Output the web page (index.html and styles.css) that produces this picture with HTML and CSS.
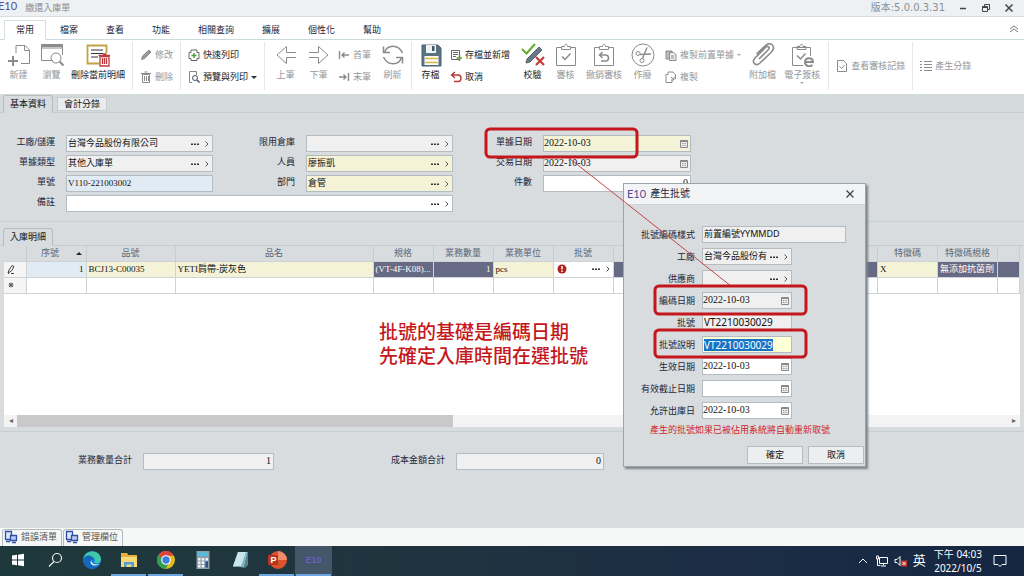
FILE: index.html
```html
<!DOCTYPE html>
<html lang="zh-Hant">
<head>
<meta charset="utf-8">
<title>繳還入庫單</title>
<link rel="stylesheet" href="styles.css">
</head>
<body>
<svg class="sprite" aria-hidden="true">
  <symbol id="cal" viewBox="0 0 10 10"><path d="M1.5 1.5h7v7h-7z" fill="#eee" stroke="#888"/><path d="M1.5 2.5h7" stroke="#888" stroke-width="1"/><path d="M3 4.500h4M3 6.500h4" stroke="#999" stroke-dasharray="1 .6"/></symbol>
  <symbol id="dots" viewBox="0 0 10 8"><path d="M1 3.500h2v1.500h-2zM4 3.500h2v1.500h-2zM7 3.500h2v1.500h-2z" fill="#333"/></symbol>
  <symbol id="chev" viewBox="0 0 6 8"><path d="M1.500 1.500L4 4 1.500 6.500" fill="none" stroke="#555"/></symbol>
  <symbol id="clip" viewBox="0 0 24 24"><path d="M2.500 4.500h19v18h-19z"/><path d="M7.500 6.500v-3h3c0-3 3-3 3 0h3v3z" fill="#fff"/></symbol>
  <symbol id="netpc" viewBox="0 0 14 14"><path d="M1.500 1.500h6v8h-6z" fill="#dbe6ff" stroke="#2f50a0" stroke-width="1.300"/><path d="M6.500 5.500h6v5h-6z" fill="#b9cbf6" stroke="#2f50a0" stroke-width="1.300"/><path d="M2 11.500h4M8 12.500h4" stroke="#2f50a0" stroke-width="1.300"/></symbol>
</svg>

<header class="titlebar">
  <span class="logo">E10</span>
  <h1>繳還入庫單</h1>
  <span class="version">版本:5.0.0.3.31</span>
  <button class="win" aria-label="最小化"><svg viewBox="0 0 10 10"><path d="M2 5.500h6" stroke-width="1.500"/></svg></button>
  <button class="win" aria-label="還原"><svg viewBox="0 0 10 10"><path d="M1.500 3.500h5v5h-5zM3.500 3.500v-2h5v5h-2M1.500 4.500h5"/></svg></button>
  <button class="win" aria-label="關閉"><svg viewBox="0 0 10 10"><path d="M1.500 1.500l7 7M8.500 1.500l-7 7" stroke-width="1.500"/></svg></button>
</header>

<nav class="menu">
  <button class="active">常用</button><button>檔案</button><button>查看</button><button>功能</button><button>相關查詢</button><button>擴展</button><button>個性化</button><button>幫助</button>
  <button class="collapse" aria-label="收合"><svg viewBox="0 0 10 8"><path d="M1 4l4-3 4 3M1 7l4-3 4 3" fill="none" stroke="#777"/></svg></button>
</nav>

<div class="ribbon">
  <div class="group">
    <button class="big off"><svg viewBox="0 0 24 24"><path d="M9 10V2.500h9l4.500 4.500v13.500H14M17.500 3v4.500H22"/><path d="M6 13v10M1 18h10" stroke-width="2"/></svg>新建</button>
    <button class="big off"><svg viewBox="0 0 24 24"><path d="M13 17.500H1.500v-16h21V12M1.500 5h21" /><path d="M2 3h20" stroke-width="2"/><circle cx="16" cy="15" r="5"/><path d="M19.500 18.500l4 4" stroke-width="2"/></svg>瀏覽</button>
    <button class="big"><svg viewBox="0 0 24 24"><path d="M13 20.500H1.500v-18h19V10" stroke="#c3a243" stroke-width="1.800"/><path d="M5 7h12M5 10.500h12M5 14h7" stroke="#334"/><path d="M14 13.500h9v9.500h-9zM12.500 12.500h12M17 11h3.500M16.500 15v6M18.500 15v6M20.500 15v6" stroke="#c0393c" stroke-width="1.300"/></svg>刪除當前明細</button>
  </div>
  <div class="group pair">
    <button class="small off"><svg viewBox="0 0 12 12"><path d="M1.500 10.500l1-3.500L9 1l2 2-6.500 6.500z" fill="#999"/></svg>修改</button>
    <button class="small off"><svg viewBox="0 0 12 12"><path d="M2.500 3.500h7v8h-7zM1 2.500h10M4.500 1h3M4.500 5v5M6.500 5v5M8.500 5v5"/></svg>刪除</button>
  </div>
  <div class="group pair">
    <button class="small"><svg viewBox="0 0 12 12"><path d="M3 3.500V1h6v2.500M3 3.500h-2v6h2v2h6v-2h2v-6H9" stroke="#666"/><path d="M6 4v5M3.500 6.500h5" stroke="#4f9a3a" stroke-width="1.500"/></svg>快速列印</button>
    <button class="small"><svg viewBox="0 0 12 12"><path d="M4 11.500H1.500V.500h7V4" stroke="#888"/><circle cx="7" cy="7" r="2.500" stroke="#456"/><path d="M9 9l2.500 2.500" stroke="#456" stroke-width="1.500"/></svg>預覽與列印<i class="caret"></i></button>
  </div>
  <div class="group record">
    <button class="big off"><svg viewBox="0 0 24 24"><path d="M22 9.500h-9.500V3.500L3 12l9.500 8.500v-6H22" /></svg>上筆</button>
    <button class="big off"><svg viewBox="0 0 24 24"><path d="M2 9.500h9.500V3.500L21 12l-9.500 8.500v-6H2" /></svg>下筆</button>
    <div class="pair">
      <button class="small off"><svg viewBox="0 0 12 12"><path d="M1.500 2v8M11 6H4M6.500 3.500L4 6l2.500 2.500" stroke-width="1.400"/></svg>首筆</button>
      <button class="small off"><svg viewBox="0 0 12 12"><path d="M10.500 2v8M1 6h7M5.500 3.500L8 6 5.500 8.500" stroke-width="1.400"/></svg>末筆</button>
    </div>
    <button class="big off"><svg viewBox="0 0 24 24"><path d="M3.500 9.500C6 1.500 17 .500 21.500 10M20.500 14.500C18 22.500 7 23.500 2.500 14M2.500 3.500v6H9M21.500 20.500v-6H15" stroke-width="1.500"/></svg>刷新</button>
  </div>
  <div class="group roomy">
    <button class="big"><svg viewBox="0 0 24 24"><path d="M3 2h16l3 3v18H3z" fill="#587284" stroke="#4b6273"/><path d="M7 2h10v8H7z" fill="#eef3f6" stroke="none"/><path d="M13 3h2.500v5H13z" fill="#456" stroke="none"/><path d="M5.500 13h14v9h-14z" fill="#fff" stroke="none"/><path d="M6 15.500h13M6 19.500h13" stroke="#d8b63f" stroke-width="1.500"/></svg>存檔</button>
    <div class="pair">
      <button class="small"><svg viewBox="0 0 12 12"><path d="M1.500 1.500h8v9h-8zM3 3.500h5M3 5.500h5M3 7.500h3" stroke="#667"/><path d="M9.500 6v6M6.500 9h6" stroke="#5aa02c" stroke-width="1.600"/></svg>存檔並新增</button>
      <button class="small"><svg viewBox="0 0 12 12"><path d="M5 1L1.500 4 5 7M2 4h6c4 0 4 6.500 0 6.500H4" stroke="#b53a35" stroke-width="1.400"/></svg>取消</button>
    </div>
    <button class="big"><svg viewBox="0 0 24 24"><path d="M1 6l4.500 4.500L14 1" stroke="#5fae2e" stroke-width="2"/><path d="M5 20l1-4L18 4l3 3L9 19z" fill="#667a88" stroke="#526370"/><path d="M15 14l8 8M23 14l-8 8" stroke="#c33b38" stroke-width="2.200"/></svg>校驗</button>
    <button class="big off"><svg viewBox="0 0 24 24"><use href="#clip"/><path d="M8 13.500l3 3 5.500-6" stroke-width="1.500"/></svg>審核</button>
    <button class="big off"><svg viewBox="0 0 24 24"><use href="#clip"/><path d="M10.500 9L7.500 12l3 3M8 12h5.500c4 0 4 6 0 6H9" stroke-width="1.500"/></svg>撤銷審核</button>
    <button class="big off"><svg viewBox="0 0 24 24"><circle cx="12" cy="12" r="11"/><circle cx="7" cy="10.500" r="2"/><circle cx="11" cy="17.500" r="2"/><path d="M9 11.500L20 11M11.500 15.500L16 4.500" stroke-width="1.400"/></svg>作廢</button>
    <div class="pair wide">
      <button class="small off"><svg viewBox="0 0 12 12"><path d="M1 2h6v8H1z" fill="#bbb"/><path d="M4.500 3.500h4l2.500 2v6H4.500zM6 7h3M6 9h3" fill="#eee"/></svg>複製前置單據<i class="caret faint"></i></button>
      <button class="small off"><svg viewBox="0 0 12 12"><path d="M3 3.500V1h5l2.500 2.500V8M3 3.500H1v8h6v-2"/><path d="M6 6l3 3M9 6v3H6"/></svg>複製</button>
    </div>
    <button class="big off"><svg viewBox="0 0 24 24"><path d="M8 16L17 7c2.500-2.500 0-5-2.500-2.500L4 15c-4 4.500 1 9 5 5L20.500 9c5-5.500-1-11-6-6.500L5.500 11" stroke-width="1.600"/></svg>附加檔</button>
    <button class="big off"><svg viewBox="0 0 24 24"><path d="M13 22.500H2.500v-18h18V13M7 6.500v-3h3c0-3 3-3 3 0h3v3z"/><path d="M7 12.500l3.500 3.500 5-5.500" stroke-width="1.500"/><path d="M15 19h8c0-5-8-5-8 0 0 4.500 5 5 7.500 3" stroke-width="2"/></svg>電子簽核<i class="caret faint"></i></button>
  </div>
  <div class="group solo">
    <button class="small off"><svg viewBox="0 0 12 12"><path d="M1.500.500h6l3 3v8h-9zM3.500 6.500l2 2 3-3.500"/></svg>查看審核記錄</button>
  </div>
  <div class="group solo">
    <button class="small off"><svg viewBox="0 0 12 12"><path d="M0 1.500h2M4 1.500h8M0 4.500h2M4 4.500h8M0 7.500h2M4 7.500h8M0 10.500h2M4 10.500h8"/></svg>產生分錄</button>
  </div>
</div>

<main>
  <div class="tabs"><button class="active">基本資料</button><button>會計分錄</button></div>

  <form class="form">
    <label for="f1">工廠/儲運</label>
    <div class="field"><input id="f1" value="台灣今品股份有限公司"><button type="button" aria-label="選擇"><svg><use href="#dots"/></svg></button><button type="button" aria-label="開啟" class="go"><svg><use href="#chev"/></svg></button></div>
    <label for="f2">限用倉庫</label>
    <div class="field"><input id="f2"><button type="button" aria-label="選擇"><svg><use href="#dots"/></svg></button><button type="button" aria-label="開啟" class="go"><svg><use href="#chev"/></svg></button></div>
    <label for="f3">單據日期</label>
    <div class="field must date"><input id="f3" value="2022-10-03"><button type="button" aria-label="日曆"><svg><use href="#cal"/></svg></button></div>

    <label for="f4">單據類型</label>
    <div class="field"><input id="f4" value="其他入庫單"><button type="button" aria-label="選擇"><svg><use href="#dots"/></svg></button><button type="button" aria-label="開啟" class="go"><svg><use href="#chev"/></svg></button></div>
    <label for="f5">人員</label>
    <div class="field must"><input id="f5" value="廖振凱"><button type="button" aria-label="選擇"><svg><use href="#dots"/></svg></button><button type="button" aria-label="開啟" class="go"><svg><use href="#chev"/></svg></button></div>
    <label for="f6">交易日期</label>
    <div class="field date"><input id="f6" value="2022-10-03"><button type="button" aria-label="日曆"><svg><use href="#cal"/></svg></button></div>

    <label for="f7">單號</label>
    <div class="field key"><input id="f7" value="V110-221003002"></div>
    <label for="f8">部門</label>
    <div class="field must"><input id="f8" value="倉管"><button type="button" aria-label="選擇"><svg><use href="#dots"/></svg></button><button type="button" aria-label="開啟" class="go"><svg><use href="#chev"/></svg></button></div>
    <label for="f9">件數</label>
    <div class="field open num"><input id="f9" value="0"></div>

    <label for="f10">備註</label>
    <div class="field open memo"><input id="f10"><button type="button" aria-label="選擇"><svg><use href="#dots"/></svg></button><button type="button" aria-label="開啟" class="go"><svg><use href="#chev"/></svg></button></div>
  </form>

  <section class="detail">
    <div class="tabs"><button class="active">入庫明細</button></div>
    <div class="sheet">
      <table>
        <colgroup><col class="c-mark"><col class="c-unit"><col class="c-item"><col class="c-name"><col class="c-unit"><col class="c-unit"><col class="c-unit"><col class="c-unit"><col><col class="c-unit"><col class="c-unit"><col class="c-mark"></colgroup>
        <thead><tr><th></th><th>序號<i class="sort"></i></th><th>品號</th><th>品名</th><th>規格</th><th>業務數量</th><th>業務單位</th><th>批號</th><th></th><th>特徵碼</th><th>特徵碼規格</th><th></th></tr></thead>
        <tbody>
          <tr><td class="mark"><svg viewBox="0 0 10 10"><path d="M2 9l1-3 3-4.500 2 1L5.500 7zM2 9.500h1M5 9.500h3" fill="none" stroke="#444"/></svg></td><td class="key num">1</td><td class="must">BCJ13-C00035</td><td class="must">YETI肩帶-炭灰色</td><td class="lock">(VT-4F-K08)...</td><td class="lock num">1</td><td class="must">pcs</td><td class="pick"><div class="lot"><svg class="err" viewBox="0 0 10 10"><circle cx="5" cy="5" r="4.500" fill="#b3201c"/><path d="M5 2v3.500M5 6.500v1.500" stroke="#fff" stroke-width="1.500"/></svg><button aria-label="選擇"><svg><use href="#dots"/></svg></button><button aria-label="開啟" class="go"><svg><use href="#chev"/></svg></button></div></td><td class="lock"></td><td class="must">X</td><td class="lock">無添加抗菌劑</td><td class="lock"></td></tr>
          <tr><td class="mark"><svg viewBox="0 0 10 10"><path d="M5 2.500v5M2.500 5h5M3 3l4 4M7 3L3 7" stroke="#555"/></svg></td><td></td><td></td><td></td><td></td><td></td><td></td><td></td><td></td><td></td><td></td><td></td></tr>
        </tbody>
      </table>
      <div class="scroll"><button aria-label="向左">◂</button><div class="track"><div class="thumb"></div></div><button aria-label="向右">▸</button></div>
    </div>
  </section>

  <section class="totals">
    <label for="t1">業務數量合計</label><div class="field num"><input id="t1" value="1"></div>
    <label for="t2">成本金額合計</label><div class="field num"><input id="t2" value="0"></div>
  </section>
</main>

<div class="dock">
  <button><svg><use href="#netpc"/></svg>錯誤清單</button><button><svg><use href="#netpc"/></svg>管理欄位</button>
</div>

<footer class="taskbar">
  <button aria-label="開始"><svg viewBox="0 0 20 20"><path d="M4 5.500l5-.7v4.700H4zM10 4.700l6-.9v5.700h-6zM4 10.500h5v4.700l-5-.7zM10 10.500h6v5.700l-6-.9z" fill="#fff"/></svg></button>
  <button aria-label="搜尋"><svg viewBox="0 0 20 20"><circle cx="12" cy="8" r="4.500" fill="none" stroke="#eee" stroke-width="1.200"/><path d="M9 11.500L4 16.500" stroke="#eee" stroke-width="1.300"/></svg></button>
  <button aria-label="Edge"><svg viewBox="0 0 20 20"><circle cx="10" cy="10" r="9" fill="#1c7fd4"/><path d="M1.500 8C4-1 18-.5 19 9c0 4-4 5-7 3.500 2-2 .5-5.500-2.500-5.500C6 7 3 7 1.500 8z" fill="#41c8a8"/><path d="M3 7c3-3 9-1 8.500 3-3-1-4.500 2.500-2 5 2 2 5 2 7.500.500-4 5-13 4-15.500-3-.5-2 0-4 1.500-5.500z" fill="#1568bc"/><path d="M9.500 10c-1 3 3 6 8 3.500-3 3-9 2.500-9-1.500z" fill="#e7f5f8"/></svg></button>
  <button aria-label="檔案總管" class="run"><svg viewBox="0 0 20 20"><path d="M2 3h6l1.500 2H18v12H2z" fill="#e5b13c"/><path d="M2 7h16v10H2z" fill="#f8d978"/><path d="M5 17v-5h10v5h-2.500v-2.500h-5V17z" fill="#4d9fd6"/></svg></button>
  <button aria-label="Chrome" class="run"><svg viewBox="0 0 20 20"><circle cx="10" cy="10" r="9" fill="#e3b820"/><path d="M10 10L2.200 5.500A9 9 0 0 1 17.800 5.500L10 6z" fill="#dc4437"/><path d="M10 10L2.200 5.500A9 9 0 0 0 9.500 19l4-7z" fill="#2f9e50"/><circle cx="10" cy="10" r="4.800" fill="#fff"/><circle cx="10" cy="10" r="3.700" fill="#3c7fe0"/></svg></button>
  <button aria-label="小算盤"><svg viewBox="0 0 20 20"><path d="M3.500 1h13v18h-13z" fill="#8d9fae"/><path d="M5 2.500h10v3.500H5z" fill="#51c0dc"/><path d="M5 8h2.500v2.500H5zM8.700 8h2.500v2.500H8.700zM12.500 8H15v2.500h-2.500zM5 11.500h2.500V14H5zM8.700 11.500h2.500V14H8.700zM5 15h2.500v2.500H5zM8.700 15h2.500v2.500H8.700z" fill="#f2f5f7"/><path d="M12.500 11.500H15v6h-2.500z" fill="#2a4f86"/></svg></button>
  <button aria-label="記事本"><svg viewBox="0 0 20 20"><path d="M8 2h10l-4 15H3z" fill="#7fb6c6"/><path d="M8 2h8l-5 14H3z" fill="#c9e6ec"/><path d="M3 16l11 1 4-15v13l-3 3z" fill="#5c8190"/></svg></button>
  <button aria-label="PowerPoint" class="run"><svg viewBox="0 0 20 20"><circle cx="11" cy="10" r="9" fill="#d9532f"/><path d="M11 1a9 9 0 0 1 9 9h-9z" fill="#f08c6c"/><path d="M1 5h10v10H1z" fill="#b7351b"/><text x="3.500" y="13" class="ppt">P</text></svg></button>
  <button class="run current">E10</button>
  <span class="tray">
    <svg viewBox="0 0 12 12"><path d="M2 8l4-4 4 4"/></svg>
    <svg viewBox="0 0 14 12"><path d="M4.500 2.500h8v6h-8zM8.500 8.500v2M6 11h5M1.500 1v3h2v-3zM2.500 4v6.500h3"/></svg>
    <svg viewBox="0 0 14 12"><path d="M1 4.500h2l3-3v9l-3-3H1z"/><path d="M7 5.500h6v6H7z" fill="#c8322f" stroke="none"/><path d="M8.500 7l3 3M11.500 7l-3 3"/></svg>
    <b>英</b>
    <time>下午 04:03<br>2022/10/5</time>
    <svg class="note" viewBox="0 0 14 14"><path d="M1 1.500h12v9H9l-2 2-2-2H1z"/></svg>
  </span>
</footer>

<p class="remark">批號的基礎是編碼日期<br>先確定入庫時間在選批號</p>

<section class="dialog" role="dialog" aria-labelledby="dt">
  <header><span class="logo">E10</span><h2 id="dt">產生批號</h2><button class="win" aria-label="關閉"><svg viewBox="0 0 10 10"><path d="M1.500 1.500l7 7M8.500 1.500l-7 7" stroke-width="1.300"/></svg></button></header>
  <form>
    <label for="d1">批號編碼樣式</label><div class="field long mono"><input id="d1" value="前置編號YYMMDD"></div>
    <label for="d2">工廠</label><div class="field"><input id="d2" value="台灣今品股份有"><button type="button" aria-label="選擇"><svg><use href="#dots"/></svg></button><button type="button" aria-label="開啟" class="go"><svg><use href="#chev"/></svg></button></div>
    <label for="d3">供應商</label><div class="field"><input id="d3"><button type="button" aria-label="選擇"><svg><use href="#dots"/></svg></button><button type="button" aria-label="開啟" class="go"><svg><use href="#chev"/></svg></button></div>
    <label for="d4">編碼日期</label><div class="field date"><input id="d4" value="2022-10-03"><button type="button" aria-label="日曆"><svg><use href="#cal"/></svg></button></div>
    <label for="d5">批號</label><div class="field mono"><input id="d5" value="VT2210030029"></div>
    <label id="l6">批號說明</label><div class="field mono focus"><span class="sel" role="textbox" aria-labelledby="l6" contenteditable="true">VT2210030029</span></div>
    <label for="d7">生效日期</label><div class="field date open"><input id="d7" value="2022-10-03"><button type="button" aria-label="日曆"><svg><use href="#cal"/></svg></button></div>
    <label for="d8">有效截止日期</label><div class="field date open"><input id="d8"><button type="button" aria-label="日曆"><svg><use href="#cal"/></svg></button></div>
    <label for="d9">允許出庫日</label><div class="field date open"><input id="d9" value="2022-10-03"><button type="button" aria-label="日曆"><svg><use href="#cal"/></svg></button></div>
  </form>
  <p>產生的批號如果已被佔用系統將自動重新取號</p>
  <div class="actions"><button>確定</button><button>取消</button></div>
</section>

<svg class="marks" aria-hidden="true">
  <path d="M569 158L731 286" stroke="#c4444a" stroke-width="1"/>
  <rect x="486" y="129" width="151" height="28" rx="4"/>
  <rect x="655" y="286" width="151" height="28" rx="4"/>
  <rect x="655" y="330" width="151" height="27" rx="4"/>
</svg>
</body>
</html>
```
FILE: styles.css
```css
* { box-sizing: border-box; }
body {
  margin: 0;
  min-height: 100vh;
  display: flex;
  flex-direction: column;
  position: relative;
  overflow-x: hidden;
  background: #d8dcde;
  color: #23263a;
  font: 9px/12px "Liberation Sans", "Noto Sans CJK TC", sans-serif;
}
button, input { font: inherit; color: inherit; margin: 0; padding: 0; border: 0; background: none; }
h1, h2, p { margin: 0; font-size: inherit; font-weight: 400; }
.sprite { position: absolute; width: 0; height: 0; }
.logo { color: #54499a; font: 11px/14px Lato, sans-serif; }

.titlebar { display: flex; align-items: center; height: 17px; padding-right: 7px; background: #edf1f3; border-bottom: 1px solid #d9dddf; }
.titlebar .logo { padding-bottom: 4px; margin-left: -2px; }
.titlebar h1 { flex: 1; margin-left: 8px; color: #8c8f94; }
.version { color: #8c8f94; font: 10px/12px "DejaVu Sans", "Noto Sans CJK TC", sans-serif; margin-right: 3px; }
.win { width: 16px; margin-left: 7px; display: flex; justify-content: center; }
.win svg { width: 10px; height: 10px; fill: none; stroke: #444; }

.menu { display: flex; height: 23px; padding: 3px 4px 0; background: #fff; border-bottom: 1px solid #cbdadb; }
.menu button { padding: 0 13px; border: 1px solid transparent; height: 20px; }
.menu .active { padding: 0 11px; background: #fff; border-color: #d5dee0; border-bottom-color: #fff; }
.menu .collapse { margin-left: auto; padding: 0; }
.menu svg { width: 10px; height: 8px; }

.ribbon { display: flex; height: 54px; padding-left: 2px; background: #fff; color: #222; }
.group { display: flex; margin: 2px 0 4px; padding: 0 4px; border-right: 1px solid #e4e7e8; }
.group:first-child { padding-left: 0; }
.group:last-child { border-right: 0; }
.group svg { fill: none; stroke: #8b8b8b; }
.off { color: #94979b; }
.big { display: flex; flex-direction: column; align-items: center; min-width: 33px; padding: 1px 3px 0; line-height: 14px; }
.big svg { width: 24px; height: 24px; margin-bottom: 1px; }
.record { padding-right: 2px; }
.record .pair + .big { margin-left: 2px; }
.group.roomy { padding-left: 2px; }
.roomy .big { padding: 1px 4px 0; }
.roomy .pair + .big { margin-left: 3px; }
.pair { display: flex; flex-direction: column; gap: 8px; padding-top: 6px; }
.group.pair { padding-top: 6px; }
.roomy .wide { padding-left: 3px; }
.roomy .wide + .big { margin-left: 1px; }
.small { display: flex; align-items: center; gap: 3px; padding: 0 3px; height: 14px; }
.small svg { width: 12px; height: 12px; }
.solo { align-items: center; }
.caret { border: 3px solid transparent; border-top-color: #333; border-bottom: 0; }
.faint { border-width: 2px; border-bottom: 0; border-top-color: #aaa; }

main { flex: 1; display: flex; flex-direction: column; }
.tabs { display: flex; align-items: center; gap: 4px; height: 19px; padding: 1px 3px 0; background: #d4d9db; border-bottom: 1px solid #c7cccf; }
.tabs button { height: 14px; line-height: 12px; padding: 0 6px; background: #e9ecee; border: 1px solid #c9ced1; color: #111; }
.tabs .active { height: 18px; background: #d8dcde; border-color: #b6bcc0; border-bottom: 0; border-radius: 3px 3px 0 0; }

.form { display: grid; grid-template-columns: 55px 147px 71px 147px 68px 148px; column-gap: 11px; row-gap: 3px; padding: 22px 0 9px; border-bottom: 1px solid #cbd0d3; }
label { text-align: right; line-height: 14px; white-space: nowrap; }
.field { display: flex; align-items: center; height: 17px; min-width: 0; background: #f0f0f0; border: 1px solid #b4bcc1; color: #111; }
.field input { flex: 1; width: 0; min-width: 0; height: 100%; padding: 0 0 2px 1px; font: 9px/12px "Liberation Serif", "Noto Sans CJK TC", serif; }
.date input, .num input { font-size: 10px; }
.date input { padding-left: 0; }
.field button, .lot button { display: flex; margin-right: 4px; }
.field button svg, .lot button svg { width: 10px; height: 8px; }
.field .go svg, .lot .go svg { width: 6px; }
.field .go { margin-right: 2px; }
.date button svg { width: 10px; height: 10px; }
.date button { margin-right: 1px; }
.must { background: #f5f3d7; }
.key { background: #e1ebf3; }
.open { background: #fff; }
.num input, td.num { text-align: right; padding-right: 2px; }
.memo { grid-column: 2 / 5; }

.detail { flex: 1; display: flex; flex-direction: column; padding-top: 5px; border-bottom: 1px solid #c9ced1; }
.detail .tabs { background: none; }
.sheet { flex: 1; display: flex; flex-direction: column; justify-content: space-between; margin: 0 4px 4px; background: #fff; }
table { width: 100%; table-layout: fixed; border-collapse: collapse; font: 9px/13px "Liberation Serif", "Noto Sans CJK TC", serif; color: #111; }
.c-mark { width: 22px; } .c-unit { width: 60px; } .c-item { width: 89px; } .c-name { width: 198px; }
th { height: 15px; padding: 0; background: #d8dcde; border-right: 1px solid #c8cdd0; color: #5a6878; font: 9px/12px "Noto Sans CJK TC", sans-serif; overflow: hidden; white-space: nowrap; }
td { height: 16px; padding: 0 2px; border: 1px solid #cfd3d6; border-left-width: 0; overflow: hidden; white-space: nowrap; }
.mark { background: #f5f5f5; }
.mark svg { display: block; width: 10px; height: 10px; }
.lock { background: #666a84; color: #fff; }
.sort { display: inline-block; margin-left: 17px; margin-right: -11px; border: 3px solid transparent; border-top: 0; border-bottom-color: #222; vertical-align: middle; }
.lot { display: flex; align-items: center; padding-left: 1px; }
.lot .err { width: 10px; height: 10px; margin-right: auto; }
.lot .go { margin-right: 0; }
.scroll { display: flex; height: 12px; background: #f3f3f4; }
.scroll button { width: 13px; font-size: 8px; line-height: 12px; color: #666; }
.track { flex: 1; }
.thumb { width: 44%; height: 12px; background: #c9c9c9; }

.totals { display: flex; align-items: flex-start; gap: 11px; height: 96px; padding: 21px 0 0 78px; }
.totals .field { width: 131px; }
.totals .field + label { margin-left: 106px; }
.totals .field:last-child { width: 148px; }

.dock { display: flex; gap: 1px; height: 18px; padding: 1px 2px 0; background: #f6f7f7; }
.dock button { display: flex; align-items: center; gap: 3px; padding: 0 4px 2px 1px; border: 1px solid #b5babd; border-bottom: 0; border-radius: 3px 3px 0 0; color: #555; }
.dock svg { width: 14px; height: 14px; }

.taskbar { display: flex; height: 30px; background: linear-gradient(90deg, #1e393c, #20343f 40%, #1b2c45 75%, #152642); color: #fff; }
.taskbar > button { width: 37px; display: flex; align-items: center; justify-content: center; border-bottom: 2px solid transparent; }
.taskbar > button:first-child { width: 36px; }
.taskbar > .run { border-image: linear-gradient(90deg, transparent 8%, #6ba5e0 8%, #6ba5e0 92%, transparent 92%) 2; border-width: 0 0 2px; border-style: solid; }
.taskbar > button svg { width: 20px; height: 20px; }
.taskbar > .current { background: #44566a; color: #6a60c0; font-weight: 700; }
.ppt { font: 700 9px "Liberation Sans", sans-serif; fill: #fff; }
.tray { display: flex; align-items: center; gap: 5px; margin-left: auto; padding-right: 17px; }
.tray svg { width: 14px; height: 12px; fill: none; stroke: #fff; }
.tray b { font-size: 13px; font-weight: 400; line-height: 16px; }
.tray time { margin: 0 6px 0 3px; font: 10px/14px "Noto Sans", "Noto Sans CJK TC", sans-serif; text-align: center; }
.tray .note { height: 14px; }

.remark { position: absolute; left: 379px; top: 319px; color: #c4181c; font: 500 19px/24px "Noto Sans CJK TC", sans-serif; }

.dialog { position: absolute; left: 623px; top: 183px; width: 243px; background: #d8dcde; border: 1px solid #9ba3ad; box-shadow: 2px 2px 2px #7d8389; }
.dialog header { display: flex; align-items: center; height: 21px; padding: 0 7px 0 3px; background: #f2f4f6; border-bottom: 1px solid #cfd4d7; }
.dialog h2 { flex: 1; margin-left: 4px; font-size: 10px; }
.dialog form { display: grid; grid-template-columns: 71px 90px 53px; column-gap: 7px; row-gap: 5px; padding: 21px 0 0; }
.dialog form label { grid-column: 1; padding-top: 2px; }
.dialog .long { grid-column: 2 / 4; width: 144px; }
.dialog .mono input, .sel { font: 10px/12px "Noto Sans", "Noto Sans CJK TC", sans-serif; }
.dialog #d1 { font-size: 9px; }
.focus { background: #ffffd8; }
.sel { margin-left: 1px; background: #1874c4; color: #fff; outline: 0; }
.dialog > p { padding: 5px 0 10px 26px; color: #d3242a; line-height: 12px; }
.actions { display: flex; justify-content: flex-end; gap: 5px; padding: 0 1px 2px; }
.actions button { width: 56px; height: 18px; background: #eceeef; border: 1px solid #b4bcc1; color: #111; }

.marks { position: absolute; left: 0; top: 0; width: 820px; height: 370px; fill: none; stroke: #c4171c; stroke-width: 3; pointer-events: none; }
```
